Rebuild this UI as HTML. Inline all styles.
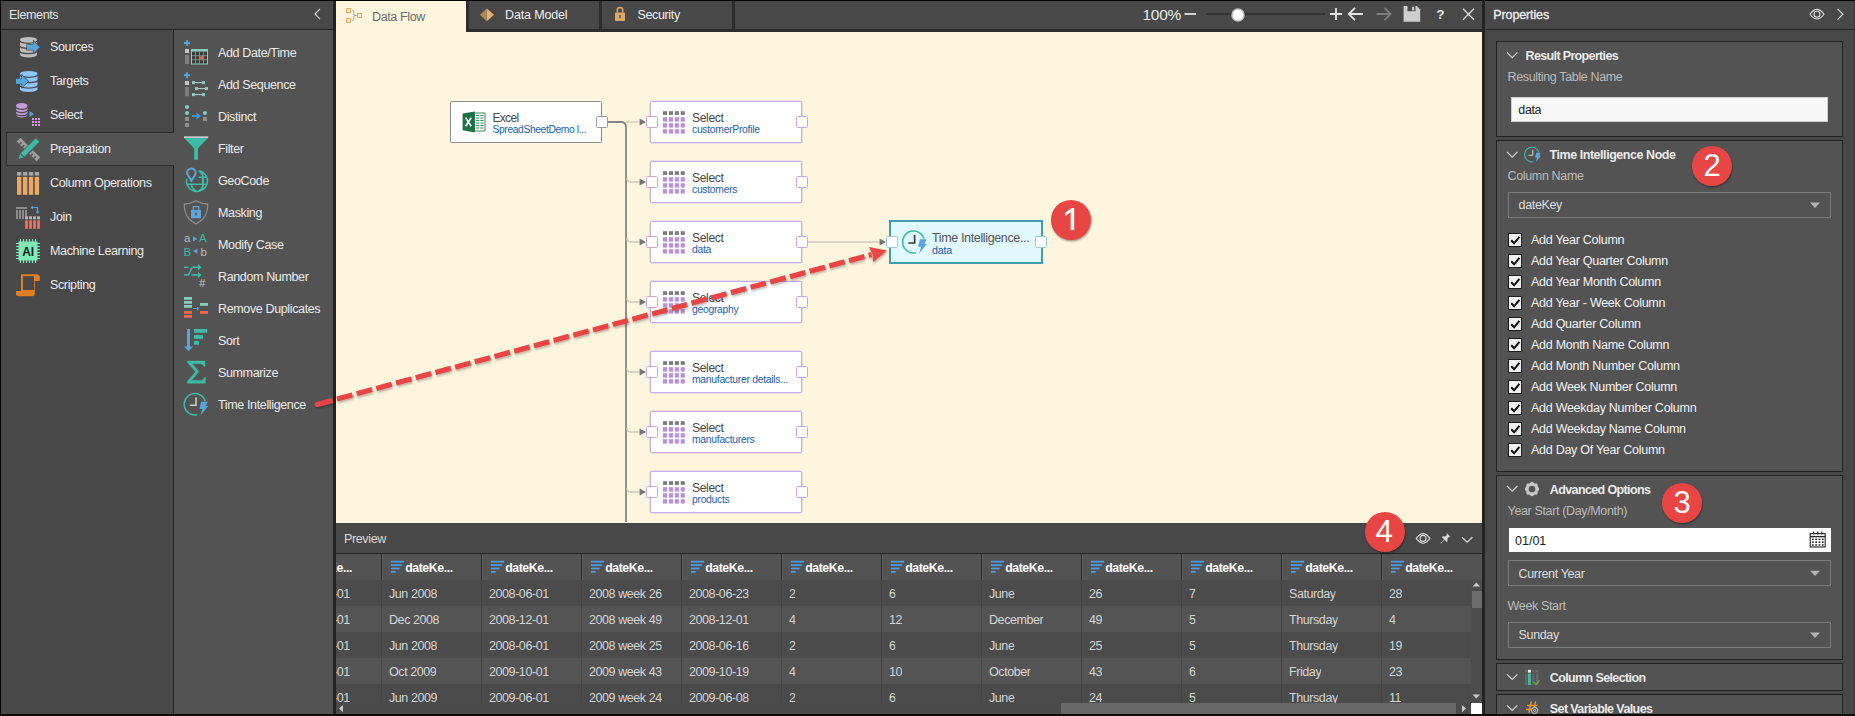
<!DOCTYPE html>
<html><head><meta charset="utf-8"><title>Data Flow</title><style>
*{box-sizing:border-box;margin:0;padding:0}
html,body{width:1855px;height:716px;overflow:hidden;background:#2b2b2b}
body{font-family:"Liberation Sans",sans-serif;font-size:13px;color:#ebebeb;position:relative}
.a{position:absolute}
.t{position:absolute;white-space:nowrap;line-height:16px;height:16px}
.b{font-weight:bold}
svg{position:absolute;overflow:visible}
</style></head><body>
<div class="a" style="left:0px;top:0px;width:1855px;height:1px;background:#000;"></div>
<div class="a" style="left:0px;top:0px;width:1px;height:716px;background:#000;"></div>
<div class="a" style="left:1px;top:1px;width:333px;height:715px;background:#484848;"></div>
<div class="a" style="left:1px;top:29px;width:333px;height:1px;background:#232323;"></div>
<div class="t" style="left:9px;top:7px;font-size:12.5px;color:#e4e4e4;letter-spacing:-0.36px;">Elements</div>
<svg style="left:0px;top:0px" width="340" height="30" viewBox="0 0 340 30"><path d="M320 9 L314.9 14 L320 19" fill="none" stroke="#d6d6d6" stroke-width="1.15"/></svg>
<div class="a" style="left:174px;top:30px;width:159px;height:686px;background:#535353;"></div>
<div class="a" style="left:173px;top:30px;width:1px;height:102px;background:#232323;"></div>
<div class="a" style="left:173px;top:166px;width:1px;height:550px;background:#232323;"></div>
<div class="a" style="left:6px;top:132px;width:168px;height:34px;background:#535353;border:1px solid #2b2b2b;border-right:none"></div>
<div class="t" style="left:50px;top:39px;font-size:12.5px;color:#ebebeb;letter-spacing:-0.36px;">Sources</div>
<div class="t" style="left:50px;top:73px;font-size:12.5px;color:#ebebeb;letter-spacing:-0.36px;">Targets</div>
<div class="t" style="left:50px;top:107px;font-size:12.5px;color:#ebebeb;letter-spacing:-0.36px;">Select</div>
<div class="t" style="left:50px;top:141px;font-size:12.5px;color:#ebebeb;letter-spacing:-0.36px;">Preparation</div>
<div class="t" style="left:50px;top:175px;font-size:12.5px;color:#ebebeb;letter-spacing:-0.36px;">Column Operations</div>
<div class="t" style="left:50px;top:209px;font-size:12.5px;color:#ebebeb;letter-spacing:-0.36px;">Join</div>
<div class="t" style="left:50px;top:243px;font-size:12.5px;color:#ebebeb;letter-spacing:-0.36px;">Machine Learning</div>
<div class="t" style="left:50px;top:277px;font-size:12.5px;color:#ebebeb;letter-spacing:-0.36px;">Scripting</div>
<div class="t" style="left:218px;top:45px;font-size:12.5px;color:#ebebeb;letter-spacing:-0.36px;">Add Date/Time</div>
<div class="t" style="left:218px;top:77px;font-size:12.5px;color:#ebebeb;letter-spacing:-0.36px;">Add Sequence</div>
<div class="t" style="left:218px;top:109px;font-size:12.5px;color:#ebebeb;letter-spacing:-0.36px;">Distinct</div>
<div class="t" style="left:218px;top:141px;font-size:12.5px;color:#ebebeb;letter-spacing:-0.36px;">Filter</div>
<div class="t" style="left:218px;top:173px;font-size:12.5px;color:#ebebeb;letter-spacing:-0.36px;">GeoCode</div>
<div class="t" style="left:218px;top:205px;font-size:12.5px;color:#ebebeb;letter-spacing:-0.36px;">Masking</div>
<div class="t" style="left:218px;top:237px;font-size:12.5px;color:#ebebeb;letter-spacing:-0.36px;">Modify Case</div>
<div class="t" style="left:218px;top:269px;font-size:12.5px;color:#ebebeb;letter-spacing:-0.36px;">Random Number</div>
<div class="t" style="left:218px;top:301px;font-size:12.5px;color:#ebebeb;letter-spacing:-0.36px;">Remove Duplicates</div>
<div class="t" style="left:218px;top:333px;font-size:12.5px;color:#ebebeb;letter-spacing:-0.36px;">Sort</div>
<div class="t" style="left:218px;top:365px;font-size:12.5px;color:#ebebeb;letter-spacing:-0.36px;">Summarize</div>
<div class="t" style="left:218px;top:397px;font-size:12.5px;color:#ebebeb;letter-spacing:-0.36px;">Time Intelligence</div>
<svg style="left:0px;top:0px" width="60" height="310" viewBox="0 0 60 310"><path d="M20 39.7 a8.5 2.7 0 0 1 17 0 v15.1 a8.5 2.7 0 0 1 -17 0 z" fill="#bdbdbd"/><path d="M19.7 40.6 a8.8 2.7 0 0 0 17.6 0" fill="none" stroke="#484848" stroke-width="1.25"/><path d="M19.7 45.800000000000004 a8.8 2.7 0 0 0 17.6 0" fill="none" stroke="#484848" stroke-width="1.25"/><path d="M19.7 51.0 a8.8 2.7 0 0 0 17.6 0" fill="none" stroke="#484848" stroke-width="1.25"/><path d="M27 44.6 h6.5 v-3.4 l6.3 6 l-6.3 6 v-3.4 h-6.5 z" fill="#54a6dc" stroke="#484848" stroke-width="1.2" paint-order="stroke"/><path d="M20 73.7 a8.75 2.7 0 0 1 17.5 0 v15.6 a8.75 2.7 0 0 1 -17.5 0 z" fill="#8fc4f6"/><path d="M19.7 74.60000000000001 a9.05 2.7 0 0 0 18.1 0" fill="none" stroke="#484848" stroke-width="1.25"/><path d="M19.7 79.96666666666667 a9.05 2.7 0 0 0 18.1 0" fill="none" stroke="#484848" stroke-width="1.25"/><path d="M19.7 85.33333333333334 a9.05 2.7 0 0 0 18.1 0" fill="none" stroke="#484848" stroke-width="1.25"/><path d="M16 78.8 h6 v-3.6 l6.3 6.1 l-6.3 6.1 v-3.6 h-6 z" fill="#54a6dc" stroke="#484848" stroke-width="1.2" paint-order="stroke"/><path d="M16 105.7 a5.75 2.7 0 0 1 11.5 0 v9.1 a5.75 2.7 0 0 1 -11.5 0 z" fill="#c09bd8"/><path d="M15.7 106.60000000000001 a6.05 2.7 0 0 0 12.1 0" fill="none" stroke="#484848" stroke-width="1.25"/><path d="M15.7 109.80000000000001 a6.05 2.7 0 0 0 12.1 0" fill="none" stroke="#484848" stroke-width="1.25"/><path d="M15.7 113.00000000000001 a6.05 2.7 0 0 0 12.1 0" fill="none" stroke="#484848" stroke-width="1.25"/><path d="M29.5 111 l4.3 3 l-4.3 3 z" fill="#54a6dc"/><rect x="32" y="118" width="2" height="2" fill="#d59be0"/><rect x="32" y="121" width="2" height="2" fill="#d59be0"/><rect x="32" y="124" width="2" height="2" fill="#d59be0"/><rect x="35" y="118" width="2" height="2" fill="#d59be0"/><rect x="35" y="121" width="2" height="2" fill="#d59be0"/><rect x="35" y="124" width="2" height="2" fill="#d59be0"/><rect x="38" y="118" width="2" height="2" fill="#d59be0"/><rect x="38" y="121" width="2" height="2" fill="#d59be0"/><rect x="38" y="124" width="2" height="2" fill="#d59be0"/><g transform="translate(28.5 149.5) rotate(-45)"><path d="M-2.6 -14 h5.2 v28 h-5.2 z" fill="#9c9c9c"/><path d="M-2.6 -10 h2.6 M-2.6 -6 h2.6 M-2.6 6 h2.6 M-2.6 10 h2.6" stroke="#535353" stroke-width="1.6"/><rect x="-4" y="-3.5" width="8" height="7" fill="#535353"/></g><g transform="translate(28 149.5) rotate(45)"><path d="M-2.5 -13.5 h5 v22 l-2.5 5 l-2.5 -5 z" fill="#3dbba6"/><path d="M-2.5 8.2 h5" stroke="#535353" stroke-width="1"/></g><rect x="17.0" y="172" width="4.4" height="3.6" fill="#a9a9a9"/><rect x="17.0" y="176.8" width="4.4" height="18" fill="#e9a964"/><rect x="22.9" y="172" width="4.4" height="3.6" fill="#a9a9a9"/><rect x="22.9" y="176.8" width="4.4" height="18" fill="#e9a964"/><rect x="28.8" y="172" width="4.4" height="3.6" fill="#a9a9a9"/><rect x="28.8" y="176.8" width="4.4" height="18" fill="#e9a964"/><rect x="34.7" y="172" width="4.4" height="3.6" fill="#a9a9a9"/><rect x="34.7" y="176.8" width="4.4" height="18" fill="#e9a964"/><rect x="16" y="207" width="11" height="2" fill="#8c8c8c"/><rect x="16" y="210" width="2" height="9" fill="#8c8c8c"/><rect x="19" y="210" width="2" height="9" fill="#8c8c8c"/><rect x="22" y="210" width="2" height="9" fill="#8c8c8c"/><rect x="25" y="210" width="2" height="9" fill="#8c8c8c"/><rect x="25" y="216.3" width="3" height="3" fill="#b5b5b5"/><rect x="25" y="220.3" width="3" height="8.5" fill="#ee6a50"/><rect x="29" y="216.3" width="3" height="3" fill="#b5b5b5"/><rect x="29" y="220.3" width="3" height="8.5" fill="#ee6a50"/><rect x="33" y="216.3" width="3" height="3" fill="#b5b5b5"/><rect x="33" y="220.3" width="3" height="8.5" fill="#ee6a50"/><rect x="37" y="216.3" width="3" height="3" fill="#b5b5b5"/><rect x="37" y="220.3" width="3" height="8.5" fill="#ee6a50"/><path d="M32.5 207.5 h5 v4.5" fill="none" stroke="#54a6dc" stroke-width="1.2"/><path d="M33 205.5 l-2.6 2 l2.6 2 z M35.5 211.5 l2 2.6 l2 -2.6 z" fill="#54a6dc"/><path d="M20.5 239 v24 M23.5 239 v24 M26.5 239 v24 M29.5 239 v24 M32.5 239 v24 M35.5 239 v24 M16 243.5 h24 M16 246.5 h24 M16 249.5 h24 M16 252.5 h24 M16 255.5 h24 M16 258.5 h24 " stroke="#7ee8b6" stroke-width="1.2"/><rect x="18.5" y="241.5" width="19" height="19" fill="#7ee8b6"/><text x="28" y="255.6" font-family="Liberation Sans" font-weight="bold" font-size="12" fill="#1c1c1c" text-anchor="middle" letter-spacing="-0.3">AI</text><path d="M21 274.2 h15.5 a3.3 3.3 0 0 1 3.3 3.3 v3.6 h-5 v12.5 a2.6 2.6 0 0 1 -2.6 2.6 h-13.6 a2.6 2.6 0 0 1 -2.6 -2.6 v-2.6 h5 z" fill="#e17d22"/><path d="M23 276.2 h11 v13.8 h-11 z" fill="#484848"/><path d="M21 291.5 h12.3" stroke="#e17d22" stroke-width="1"/></svg>
<svg style="left:0px;top:0px" width="340" height="430" viewBox="0 0 340 430"><path d="M184 43 h6 M187 40 v6" stroke="#54a6dc" stroke-width="1.8"/><rect x="185" y="49" width="4" height="4" fill="#c4c4c4"/><rect x="185" y="55" width="4" height="9" fill="#7e7e7e"/><rect x="191.5" y="49.5" width="16" height="14.5" fill="#3c3c3c" stroke="#84cfbe" stroke-width="1"/><rect x="191" y="49" width="17" height="2.6" fill="#84cfbe"/><path d="M195.5 52 v12 M199.5 52 v12 M203.5 52 v12 M192 55.7 h15 M192 59.7 h15" stroke="#8fb5ab" stroke-width="0.9" opacity="0.75"/><rect x="200.2" y="56.3" width="3" height="3" fill="#f0684a"/><path d="M184 75.2 h6 M187 72.2 v6" stroke="#54a6dc" stroke-width="1.8"/><rect x="185" y="81" width="4" height="4" fill="#c4c4c4"/><rect x="185" y="87" width="4" height="9.2" fill="#7e7e7e"/><path d="M194 82.6 h9" stroke="#c9c9c9" stroke-width="1"/><rect x="192" y="81.1" width="3" height="3" fill="#84cfbe"/><rect x="202" y="81.1" width="3" height="3" fill="#84cfbe"/><path d="M197 88.6 h9" stroke="#c9c9c9" stroke-width="1"/><rect x="195" y="87.1" width="3" height="3" fill="#84cfbe"/><rect x="205" y="87.1" width="3" height="3" fill="#84cfbe"/><path d="M194 94.6 h9" stroke="#c9c9c9" stroke-width="1"/><rect x="192" y="93.1" width="3" height="3" fill="#84cfbe"/><rect x="202" y="93.1" width="3" height="3" fill="#84cfbe"/><circle cx="187" cy="107" r="2" fill="#84cfbe"/><circle cx="187" cy="113" r="2" fill="#84cfbe"/><rect x="185" y="117" width="4" height="4" fill="#8e8e8e"/><rect x="185" y="123" width="4" height="4" fill="#8e8e8e"/><circle cx="205" cy="113" r="2" fill="#84cfbe"/><rect x="203" y="117" width="4" height="4" fill="#8e8e8e"/><path d="M192 116 h5" stroke="#3a9bdc" stroke-width="1.8"/><path d="M196 112.3 l5 3.7 l-5 3.7 l1.2 -3.7 z" fill="#3a9bdc"/><rect x="184" y="136.3" width="24.2" height="1.8" fill="#c8c8c8"/><path d="M184.3 138.1 h23.6 l-9.9 10.2 v11.5 h-3.9 v-11.5 z" fill="#3dbba6"/><g fill="none" stroke="#3dbba6" stroke-width="1.5"><path d="M199.2 170.7 a10.5 10.5 0 1 1 -12.6 8.3"/><path d="M198.5 177.3 h8 M187 184.3 h19.6"/><path d="M198.5 170.8 q5 2.5 5 10.2 q0 7.7 -5 10.2 M202.7 173 v16 M191.3 184.5 q0.8 4.5 5.5 6.8"/></g><path d="M191.4 168.4 a4.3 4.3 0 0 1 4.3 4.3 c0 2.8 -2.8 5.2 -4.3 8 c-1.5 -2.8 -4.3 -5.2 -4.3 -8 a4.3 4.3 0 0 1 4.3 -4.3 z" fill="#535353" stroke="#5aa5dc" stroke-width="2"/><path d="M196 200.8 q6 3 11.6 3.2 q0.8 13.5 -11.6 19.8 q-12.4 -6.3 -11.6 -19.8 q5.6 -0.2 11.6 -3.2 z" fill="none" stroke="#8a8a8a" stroke-width="1.3"/><rect x="191" y="210" width="10" height="8.2" fill="#5aa5dc"/><path d="M193.3 210 v-3.4 h5.4 v3.4" fill="none" stroke="#5aa5dc" stroke-width="1.4"/><rect x="195.2" y="212.5" width="1.6" height="3" fill="#535353"/><text x="184" y="241.6" font-family="Liberation Sans" font-size="11.5" fill="#bdbdbd">a</text><text x="199" y="241.8" font-family="Liberation Sans" font-size="11.5" font-size="14" fill="#3dbba6">A</text><text x="183.6" y="255.6" font-family="Liberation Sans" font-size="11.5" font-size="12.5" fill="#3dbba6">B</text><text x="200.6" y="255.6" font-family="Liberation Sans" font-size="11.5" font-size="12.5" fill="#bdbdbd">b</text><path d="M193 236.3 l4.4 2.6 l-4.4 2.6 z M197.4 248.4 l-4.4 2.6 l4.4 2.6 z" fill="#54a6dc"/><g fill="none" stroke="#3dbba6" stroke-width="1.5"><path d="M184 267.3 h4.5 M192.5 267.3 h7.5 M184 275 h4.5 l3.6 -7.7 M191.5 275 h8.5"/></g><path d="M198 264.2 l3.6 3.1 l-3.6 3.1 z M198 271.9 l3.6 3.1 l-3.6 3.1 z" fill="#3dbba6"/><text x="199" y="286.8" font-family="Liberation Sans" font-size="11.5" font-size="11" fill="#c4c4c4">#</text><rect x="184" y="297" width="8" height="2.8" fill="#84cfbe"/><rect x="184" y="301" width="8" height="2.8" fill="#84cfbe"/><rect x="184" y="305" width="8" height="2.8" fill="#84cfbe"/><rect x="184" y="311" width="8" height="2.8" fill="#f0684a"/><rect x="184" y="315" width="8" height="2.8" fill="#f0684a"/><rect x="200" y="303" width="8" height="2.8" fill="#84cfbe"/><rect x="200" y="311" width="8" height="2.8" fill="#f0684a"/><path d="M193 308.5 h5" stroke="#54a6dc" stroke-width="0.9"/><path d="M197 306.6 l2.3 1.9 l-2.3 1.9 z" fill="#54a6dc"/><path d="M187 329 h3 v17.6 h3.2 l-4.7 4.6 l-4.7 -4.6 h3.2 z" fill="#54a6dc"/><rect x="194" y="329" width="13.2" height="3.8" fill="#3dbba6"/><rect x="194" y="335" width="9" height="3.8" fill="#3dbba6"/><rect x="194" y="341" width="5" height="3.8" fill="#3dbba6"/><path d="M187.3 361 h17.7 v5.4 h-1.1 q-0.5 -2.6 -3.2 -2.6 h-8.4 l6.6 8 l-7.6 8.6 h9.6 q2.8 0 3.4 -3.2 h1.1 v6 h-18.2 v-1.6 l8.4 -9.8 l-8.3 -9.6 z" fill="#3dbba6" stroke="#3dbba6" stroke-width="0.4" stroke-linejoin="miter"/><g transform="translate(195 404.3) scale(1.0)"><path d="M10.3 -3.2 A10.8 10.8 0 1 0 2.2 10.55" fill="none" stroke="#3dbba6" stroke-width="1.5"/><path d="M1 -7 v8 h-6.2" fill="none" stroke="#c9c9c9" stroke-width="1.6"/><path d="M6.2 -2.6 h6.6 l-2.2 4.2 h2.6 l-7.6 9.6 l1.8 -6.6 h-3 z" fill="#5aa5dc" stroke="#535353" stroke-width="0.8" paint-order="stroke"/></g></svg>
<div class="a" style="left:333px;top:1px;width:3px;height:715px;background:#232323;"></div>
<div class="a" style="left:336px;top:1px;width:1146px;height:28px;background:#484848;"></div>
<div class="a" style="left:336px;top:29px;width:1146px;height:3px;background:#2d2d2d;"></div>
<div class="a" style="left:336px;top:32px;width:1146px;height:491px;background:#fef5de;"></div>
<div class="a" style="left:336px;top:1px;width:130px;height:31px;background:#fef5de;"></div>
<div class="a" style="left:466px;top:1px;width:3px;height:31px;background:#2d2d2d;"></div>
<div class="a" style="left:599px;top:1px;width:3px;height:29px;background:#2d2d2d;"></div>
<div class="a" style="left:732px;top:1px;width:3px;height:29px;background:#2d2d2d;"></div>
<div class="t" style="left:372px;top:9px;font-size:12.5px;color:#6b6b6b;letter-spacing:-0.36px;">Data Flow</div>
<div class="t" style="left:505px;top:7px;font-size:12.5px;color:#f0f0f0;letter-spacing:-0.15px;">Data Model</div>
<div class="t" style="left:637.5px;top:7px;font-size:12.5px;color:#f0f0f0;letter-spacing:-0.36px;">Security</div>
<svg style="left:0px;top:0px" width="1500" height="32" viewBox="0 0 1500 32"><g fill="none" stroke="#e3a862" stroke-width="1.1"><rect x="346.6" y="8.7" width="3.9" height="3.9"/><rect x="346.6" y="18.5" width="3.9" height="3.9"/><rect x="357.6" y="13.5" width="3.9" height="3.9"/><path d="M352 10.4 h0.6 q1.2 0 1.2 1.2 v2.6 q0 1.2 1.6 1.2 q-1.6 0 -1.6 1.2 v2.6 q0 1.2 -1.2 1.2 h-0.6" stroke="#98a0b0" stroke-width="0.9"/><path d="M354.6 15.45 h2.4" stroke="#98a0b0" stroke-width="0.9"/></g><path d="M486.8 8.4 l7.2 6.4 l-7.2 6.4 z" fill="#e6b071"/><path d="M486.8 8.4 l-7 6.4 l7 6.4 z" fill="#b08a5a"/><rect x="615" y="12.5" width="10" height="8.6" rx="0.8" fill="#e3a862"/><path d="M617.3 12.5 v-2.2 a2.7 2.7 0 0 1 5.4 0 v2.2" fill="none" stroke="#e3a862" stroke-width="1.5"/><rect x="619.3" y="15" width="1.4" height="3.2" fill="#484848"/><path d="M1184.5 14 h11.5" stroke="#e6e6e6" stroke-width="1.8"/><path d="M1206 14 h119" stroke="#2c2c2c" stroke-width="1.4"/><circle cx="1238" cy="15" r="6" fill="#fff" stroke="#c4c4c4" stroke-width="1.5"/><path d="M1330 14 h12 M1336 8 v12" stroke="#e6e6e6" stroke-width="1.8"/><path d="M1363 14 h-14 M1355 7.8 l-6.2 6.2 l6.2 6.2" fill="none" stroke="#e6e6e6" stroke-width="1.8"/><path d="M1376.5 14 h14 M1384.5 7.8 l6.2 6.2 l-6.2 6.2" fill="none" stroke="#7d7d7d" stroke-width="1.8"/><path d="M1403.6 6 h13.2 l3.4 3.4 v12.4 h-16.6 z" fill="#cdcdcd"/><rect x="1407.5" y="6" width="8" height="5.2" fill="#484848"/><rect x="1412" y="6.8" width="2.2" height="3.6" fill="#cdcdcd"/><path d="M1463 8.8 l11 11 M1474 8.8 l-11 11" stroke="#e0e0e0" stroke-width="1.3"/></svg>
<div class="t" style="left:1142.5px;top:7px;font-size:15.5px;color:#ebebeb;letter-spacing:-0.3px;">100%</div>
<div class="t b" style="left:1436.2px;top:6.5px;font-size:13.5px;color:#e8e8e8;">?</div>
<svg style="left:0px;top:0px" width="1100" height="523" viewBox="0 0 1100 523"><path d="M607.5 122 H621 Q626 122 626 127 V522" fill="none" stroke="#858585" stroke-width="1.8"/><path d="M626 122 H640" stroke="#cfc9bb" stroke-width="1.3"/><path d="M626.8 178 Q626.8 182 631 182 H640" fill="none" stroke="#cfc9bb" stroke-width="1.3"/><path d="M626.8 238 Q626.8 242 631 242 H640" fill="none" stroke="#cfc9bb" stroke-width="1.3"/><path d="M626.8 298 Q626.8 302 631 302 H640" fill="none" stroke="#cfc9bb" stroke-width="1.3"/><path d="M626.8 368 Q626.8 372 631 372 H640" fill="none" stroke="#cfc9bb" stroke-width="1.3"/><path d="M626.8 428 Q626.8 432 631 432 H640" fill="none" stroke="#cfc9bb" stroke-width="1.3"/><path d="M626.8 488 Q626.8 492 631 492 H640" fill="none" stroke="#cfc9bb" stroke-width="1.3"/><path d="M639.6 118.4 L646 122 L639.6 125.6 Z" fill="#767676"/><path d="M639.6 178.4 L646 182 L639.6 185.6 Z" fill="#767676"/><path d="M639.6 238.4 L646 242 L639.6 245.6 Z" fill="#767676"/><path d="M639.6 298.4 L646 302 L639.6 305.6 Z" fill="#767676"/><path d="M639.6 368.4 L646 372 L639.6 375.6 Z" fill="#767676"/><path d="M639.6 428.4 L646 432 L639.6 435.6 Z" fill="#767676"/><path d="M639.6 488.4 L646 492 L639.6 495.6 Z" fill="#767676"/><path d="M808 242 H880" stroke="#cfc9bb" stroke-width="1.3"/><path d="M879.6 238.4 L886 242 L879.6 245.6 Z" fill="#767676"/></svg>
<div class="a" style="left:450px;top:101px;width:152px;height:42px;background:#fff;border:1px solid #8b8b8b;border-radius:1.5px"></div>
<div class="a" style="left:595.5px;top:116px;width:12px;height:12px;background:#fff;border:1px solid #9a9a9a;border-radius:1.5px"></div>
<div class="t" style="left:492.5px;top:110px;font-size:12px;color:#4a4a4a;letter-spacing:-0.7px;">Excel</div>
<div class="t" style="left:492.5px;top:121.80000000000001px;font-size:10.3px;color:#1b62aa;letter-spacing:-0.38px;">SpreadSheetDemo l...</div>
<svg style="left:0px;top:0px" width="500" height="140" viewBox="0 0 500 140"><path d="M474.5 113 h10.5 v18 h-10.5 z" fill="#fff" stroke="#2f7d55" stroke-width="0.9"/><path d="M476 115.5 h7.6 M476 118 h7.6 M476 120.5 h7.6 M476 123 h7.6 M476 125.5 h7.6 M476 128 h7.6" stroke="#3c8a62" stroke-width="1.2"/><path d="M479.8 114 v16" stroke="#fff" stroke-width="0.8"/><path d="M462.6 113.6 l12.2 -2.2 v21 l-12.2 -2.2 z" fill="#1e7145"/><path d="M465.6 117.6 l5.6 8.6 M471.2 117.6 l-5.6 8.6" stroke="#fff" stroke-width="1.7"/></svg>
<div class="a" style="left:650px;top:101px;width:152px;height:42px;background:#fff;border:1px solid #c7aee6;border-radius:1.5px;box-shadow:0 0 0 0.5px #d9c8ee"></div>
<div class="a" style="left:645.5px;top:116px;width:12px;height:12px;background:#fff;border:1px solid #c3a7e4;border-radius:1.5px"></div>
<div class="a" style="left:795.5px;top:116px;width:12px;height:12px;background:#fff;border:1px solid #c3a7e4;border-radius:1.5px"></div>
<div class="t" style="left:692px;top:110px;font-size:12.2px;color:#4a4a4a;letter-spacing:-0.4px;">Select</div>
<div class="t" style="left:692px;top:121.80000000000001px;font-size:10.4px;color:#1b62aa;letter-spacing:-0.3px;">customerProfile</div>
<div class="a" style="left:650px;top:161px;width:152px;height:42px;background:#fff;border:1px solid #c7aee6;border-radius:1.5px;box-shadow:0 0 0 0.5px #d9c8ee"></div>
<div class="a" style="left:645.5px;top:176px;width:12px;height:12px;background:#fff;border:1px solid #c3a7e4;border-radius:1.5px"></div>
<div class="a" style="left:795.5px;top:176px;width:12px;height:12px;background:#fff;border:1px solid #c3a7e4;border-radius:1.5px"></div>
<div class="t" style="left:692px;top:170px;font-size:12.2px;color:#4a4a4a;letter-spacing:-0.4px;">Select</div>
<div class="t" style="left:692px;top:181.8px;font-size:10.4px;color:#1b62aa;letter-spacing:-0.3px;">customers</div>
<div class="a" style="left:650px;top:221px;width:152px;height:42px;background:#fff;border:1px solid #c7aee6;border-radius:1.5px;box-shadow:0 0 0 0.5px #d9c8ee"></div>
<div class="a" style="left:645.5px;top:236px;width:12px;height:12px;background:#fff;border:1px solid #c3a7e4;border-radius:1.5px"></div>
<div class="a" style="left:795.5px;top:236px;width:12px;height:12px;background:#fff;border:1px solid #c3a7e4;border-radius:1.5px"></div>
<div class="t" style="left:692px;top:230px;font-size:12.2px;color:#4a4a4a;letter-spacing:-0.4px;">Select</div>
<div class="t" style="left:692px;top:241.8px;font-size:10.4px;color:#1b62aa;letter-spacing:-0.3px;">data</div>
<div class="a" style="left:650px;top:281px;width:152px;height:42px;background:#fff;border:1px solid #c7aee6;border-radius:1.5px;box-shadow:0 0 0 0.5px #d9c8ee"></div>
<div class="a" style="left:645.5px;top:296px;width:12px;height:12px;background:#fff;border:1px solid #c3a7e4;border-radius:1.5px"></div>
<div class="a" style="left:795.5px;top:296px;width:12px;height:12px;background:#fff;border:1px solid #c3a7e4;border-radius:1.5px"></div>
<div class="t" style="left:692px;top:290px;font-size:12.2px;color:#4a4a4a;letter-spacing:-0.4px;">Select</div>
<div class="t" style="left:692px;top:301.8px;font-size:10.4px;color:#1b62aa;letter-spacing:-0.3px;">geography</div>
<div class="a" style="left:650px;top:351px;width:152px;height:42px;background:#fff;border:1px solid #c7aee6;border-radius:1.5px;box-shadow:0 0 0 0.5px #d9c8ee"></div>
<div class="a" style="left:645.5px;top:366px;width:12px;height:12px;background:#fff;border:1px solid #c3a7e4;border-radius:1.5px"></div>
<div class="a" style="left:795.5px;top:366px;width:12px;height:12px;background:#fff;border:1px solid #c3a7e4;border-radius:1.5px"></div>
<div class="t" style="left:692px;top:360px;font-size:12.2px;color:#4a4a4a;letter-spacing:-0.4px;">Select</div>
<div class="t" style="left:692px;top:371.8px;font-size:10.4px;color:#1b62aa;letter-spacing:-0.3px;">manufacturer details...</div>
<div class="a" style="left:650px;top:411px;width:152px;height:42px;background:#fff;border:1px solid #c7aee6;border-radius:1.5px;box-shadow:0 0 0 0.5px #d9c8ee"></div>
<div class="a" style="left:645.5px;top:426px;width:12px;height:12px;background:#fff;border:1px solid #c3a7e4;border-radius:1.5px"></div>
<div class="a" style="left:795.5px;top:426px;width:12px;height:12px;background:#fff;border:1px solid #c3a7e4;border-radius:1.5px"></div>
<div class="t" style="left:692px;top:420px;font-size:12.2px;color:#4a4a4a;letter-spacing:-0.4px;">Select</div>
<div class="t" style="left:692px;top:431.8px;font-size:10.4px;color:#1b62aa;letter-spacing:-0.3px;">manufacturers</div>
<div class="a" style="left:650px;top:471px;width:152px;height:42px;background:#fff;border:1px solid #c7aee6;border-radius:1.5px;box-shadow:0 0 0 0.5px #d9c8ee"></div>
<div class="a" style="left:645.5px;top:486px;width:12px;height:12px;background:#fff;border:1px solid #c3a7e4;border-radius:1.5px"></div>
<div class="a" style="left:795.5px;top:486px;width:12px;height:12px;background:#fff;border:1px solid #c3a7e4;border-radius:1.5px"></div>
<div class="t" style="left:692px;top:480px;font-size:12.2px;color:#4a4a4a;letter-spacing:-0.4px;">Select</div>
<div class="t" style="left:692px;top:491.8px;font-size:10.4px;color:#1b62aa;letter-spacing:-0.3px;">products</div>
<svg style="left:0px;top:0px" width="700" height="523" viewBox="0 0 700 523"><rect x="663.0" y="111.2" width="4.1" height="3.7" fill="#7b7b7b"/><rect x="663.0" y="117.2" width="4.1" height="4.4" fill="#b88fdc"/><rect x="663.0" y="123.2" width="4.1" height="4.4" fill="#b88fdc"/><rect x="663.0" y="129.2" width="4.1" height="4.4" fill="#b88fdc"/><rect x="668.9" y="111.2" width="4.1" height="3.7" fill="#7b7b7b"/><rect x="668.9" y="117.2" width="4.1" height="4.4" fill="#b88fdc"/><rect x="668.9" y="123.2" width="4.1" height="4.4" fill="#b88fdc"/><rect x="668.9" y="129.2" width="4.1" height="4.4" fill="#b88fdc"/><rect x="674.8" y="111.2" width="4.1" height="3.7" fill="#7b7b7b"/><rect x="674.8" y="117.2" width="4.1" height="4.4" fill="#b88fdc"/><rect x="674.8" y="123.2" width="4.1" height="4.4" fill="#b88fdc"/><rect x="674.8" y="129.2" width="4.1" height="4.4" fill="#b88fdc"/><rect x="680.7" y="111.2" width="4.1" height="3.7" fill="#7b7b7b"/><rect x="680.7" y="117.2" width="4.1" height="4.4" fill="#b88fdc"/><rect x="680.7" y="123.2" width="4.1" height="4.4" fill="#b88fdc"/><rect x="680.7" y="129.2" width="4.1" height="4.4" fill="#b88fdc"/><rect x="663.0" y="171.2" width="4.1" height="3.7" fill="#7b7b7b"/><rect x="663.0" y="177.2" width="4.1" height="4.4" fill="#b88fdc"/><rect x="663.0" y="183.2" width="4.1" height="4.4" fill="#b88fdc"/><rect x="663.0" y="189.2" width="4.1" height="4.4" fill="#b88fdc"/><rect x="668.9" y="171.2" width="4.1" height="3.7" fill="#7b7b7b"/><rect x="668.9" y="177.2" width="4.1" height="4.4" fill="#b88fdc"/><rect x="668.9" y="183.2" width="4.1" height="4.4" fill="#b88fdc"/><rect x="668.9" y="189.2" width="4.1" height="4.4" fill="#b88fdc"/><rect x="674.8" y="171.2" width="4.1" height="3.7" fill="#7b7b7b"/><rect x="674.8" y="177.2" width="4.1" height="4.4" fill="#b88fdc"/><rect x="674.8" y="183.2" width="4.1" height="4.4" fill="#b88fdc"/><rect x="674.8" y="189.2" width="4.1" height="4.4" fill="#b88fdc"/><rect x="680.7" y="171.2" width="4.1" height="3.7" fill="#7b7b7b"/><rect x="680.7" y="177.2" width="4.1" height="4.4" fill="#b88fdc"/><rect x="680.7" y="183.2" width="4.1" height="4.4" fill="#b88fdc"/><rect x="680.7" y="189.2" width="4.1" height="4.4" fill="#b88fdc"/><rect x="663.0" y="231.2" width="4.1" height="3.7" fill="#7b7b7b"/><rect x="663.0" y="237.2" width="4.1" height="4.4" fill="#b88fdc"/><rect x="663.0" y="243.2" width="4.1" height="4.4" fill="#b88fdc"/><rect x="663.0" y="249.2" width="4.1" height="4.4" fill="#b88fdc"/><rect x="668.9" y="231.2" width="4.1" height="3.7" fill="#7b7b7b"/><rect x="668.9" y="237.2" width="4.1" height="4.4" fill="#b88fdc"/><rect x="668.9" y="243.2" width="4.1" height="4.4" fill="#b88fdc"/><rect x="668.9" y="249.2" width="4.1" height="4.4" fill="#b88fdc"/><rect x="674.8" y="231.2" width="4.1" height="3.7" fill="#7b7b7b"/><rect x="674.8" y="237.2" width="4.1" height="4.4" fill="#b88fdc"/><rect x="674.8" y="243.2" width="4.1" height="4.4" fill="#b88fdc"/><rect x="674.8" y="249.2" width="4.1" height="4.4" fill="#b88fdc"/><rect x="680.7" y="231.2" width="4.1" height="3.7" fill="#7b7b7b"/><rect x="680.7" y="237.2" width="4.1" height="4.4" fill="#b88fdc"/><rect x="680.7" y="243.2" width="4.1" height="4.4" fill="#b88fdc"/><rect x="680.7" y="249.2" width="4.1" height="4.4" fill="#b88fdc"/><rect x="663.0" y="291.2" width="4.1" height="3.7" fill="#7b7b7b"/><rect x="663.0" y="297.2" width="4.1" height="4.4" fill="#b88fdc"/><rect x="663.0" y="303.2" width="4.1" height="4.4" fill="#b88fdc"/><rect x="663.0" y="309.2" width="4.1" height="4.4" fill="#b88fdc"/><rect x="668.9" y="291.2" width="4.1" height="3.7" fill="#7b7b7b"/><rect x="668.9" y="297.2" width="4.1" height="4.4" fill="#b88fdc"/><rect x="668.9" y="303.2" width="4.1" height="4.4" fill="#b88fdc"/><rect x="668.9" y="309.2" width="4.1" height="4.4" fill="#b88fdc"/><rect x="674.8" y="291.2" width="4.1" height="3.7" fill="#7b7b7b"/><rect x="674.8" y="297.2" width="4.1" height="4.4" fill="#b88fdc"/><rect x="674.8" y="303.2" width="4.1" height="4.4" fill="#b88fdc"/><rect x="674.8" y="309.2" width="4.1" height="4.4" fill="#b88fdc"/><rect x="680.7" y="291.2" width="4.1" height="3.7" fill="#7b7b7b"/><rect x="680.7" y="297.2" width="4.1" height="4.4" fill="#b88fdc"/><rect x="680.7" y="303.2" width="4.1" height="4.4" fill="#b88fdc"/><rect x="680.7" y="309.2" width="4.1" height="4.4" fill="#b88fdc"/><rect x="663.0" y="361.2" width="4.1" height="3.7" fill="#7b7b7b"/><rect x="663.0" y="367.2" width="4.1" height="4.4" fill="#b88fdc"/><rect x="663.0" y="373.2" width="4.1" height="4.4" fill="#b88fdc"/><rect x="663.0" y="379.2" width="4.1" height="4.4" fill="#b88fdc"/><rect x="668.9" y="361.2" width="4.1" height="3.7" fill="#7b7b7b"/><rect x="668.9" y="367.2" width="4.1" height="4.4" fill="#b88fdc"/><rect x="668.9" y="373.2" width="4.1" height="4.4" fill="#b88fdc"/><rect x="668.9" y="379.2" width="4.1" height="4.4" fill="#b88fdc"/><rect x="674.8" y="361.2" width="4.1" height="3.7" fill="#7b7b7b"/><rect x="674.8" y="367.2" width="4.1" height="4.4" fill="#b88fdc"/><rect x="674.8" y="373.2" width="4.1" height="4.4" fill="#b88fdc"/><rect x="674.8" y="379.2" width="4.1" height="4.4" fill="#b88fdc"/><rect x="680.7" y="361.2" width="4.1" height="3.7" fill="#7b7b7b"/><rect x="680.7" y="367.2" width="4.1" height="4.4" fill="#b88fdc"/><rect x="680.7" y="373.2" width="4.1" height="4.4" fill="#b88fdc"/><rect x="680.7" y="379.2" width="4.1" height="4.4" fill="#b88fdc"/><rect x="663.0" y="421.2" width="4.1" height="3.7" fill="#7b7b7b"/><rect x="663.0" y="427.2" width="4.1" height="4.4" fill="#b88fdc"/><rect x="663.0" y="433.2" width="4.1" height="4.4" fill="#b88fdc"/><rect x="663.0" y="439.2" width="4.1" height="4.4" fill="#b88fdc"/><rect x="668.9" y="421.2" width="4.1" height="3.7" fill="#7b7b7b"/><rect x="668.9" y="427.2" width="4.1" height="4.4" fill="#b88fdc"/><rect x="668.9" y="433.2" width="4.1" height="4.4" fill="#b88fdc"/><rect x="668.9" y="439.2" width="4.1" height="4.4" fill="#b88fdc"/><rect x="674.8" y="421.2" width="4.1" height="3.7" fill="#7b7b7b"/><rect x="674.8" y="427.2" width="4.1" height="4.4" fill="#b88fdc"/><rect x="674.8" y="433.2" width="4.1" height="4.4" fill="#b88fdc"/><rect x="674.8" y="439.2" width="4.1" height="4.4" fill="#b88fdc"/><rect x="680.7" y="421.2" width="4.1" height="3.7" fill="#7b7b7b"/><rect x="680.7" y="427.2" width="4.1" height="4.4" fill="#b88fdc"/><rect x="680.7" y="433.2" width="4.1" height="4.4" fill="#b88fdc"/><rect x="680.7" y="439.2" width="4.1" height="4.4" fill="#b88fdc"/><rect x="663.0" y="481.2" width="4.1" height="3.7" fill="#7b7b7b"/><rect x="663.0" y="487.2" width="4.1" height="4.4" fill="#b88fdc"/><rect x="663.0" y="493.2" width="4.1" height="4.4" fill="#b88fdc"/><rect x="663.0" y="499.2" width="4.1" height="4.4" fill="#b88fdc"/><rect x="668.9" y="481.2" width="4.1" height="3.7" fill="#7b7b7b"/><rect x="668.9" y="487.2" width="4.1" height="4.4" fill="#b88fdc"/><rect x="668.9" y="493.2" width="4.1" height="4.4" fill="#b88fdc"/><rect x="668.9" y="499.2" width="4.1" height="4.4" fill="#b88fdc"/><rect x="674.8" y="481.2" width="4.1" height="3.7" fill="#7b7b7b"/><rect x="674.8" y="487.2" width="4.1" height="4.4" fill="#b88fdc"/><rect x="674.8" y="493.2" width="4.1" height="4.4" fill="#b88fdc"/><rect x="674.8" y="499.2" width="4.1" height="4.4" fill="#b88fdc"/><rect x="680.7" y="481.2" width="4.1" height="3.7" fill="#7b7b7b"/><rect x="680.7" y="487.2" width="4.1" height="4.4" fill="#b88fdc"/><rect x="680.7" y="493.2" width="4.1" height="4.4" fill="#b88fdc"/><rect x="680.7" y="499.2" width="4.1" height="4.4" fill="#b88fdc"/></svg>
<div class="a" style="left:889.3px;top:219.8px;width:153.7px;height:44.4px;background:#e1f8fd;border:2.6px solid #429db0"></div>
<div class="a" style="left:885.8px;top:236px;width:12px;height:12px;background:#fff;border:1px solid #9ccbd4;border-radius:1.5px"></div>
<div class="a" style="left:1035.3px;top:236px;width:12px;height:12px;background:#fff;border:1px solid #9ccbd4;border-radius:1.5px"></div>
<div class="t" style="left:932px;top:230px;font-size:12.5px;color:#555;letter-spacing:-0.36px;">Time Intelligence...</div>
<div class="t" style="left:932px;top:242px;font-size:10.6px;color:#1b62aa;letter-spacing:-0.2px;">data</div>
<svg style="left:0px;top:0px" width="1000" height="300" viewBox="0 0 1000 300"><g transform="translate(913.6 242) scale(1.02)"><path d="M10.3 -3.2 A10.8 10.8 0 1 0 2.2 10.55" fill="none" stroke="#3dbba6" stroke-width="1.5"/><path d="M1 -7 v8 h-6.2" fill="none" stroke="#3a3a3a" stroke-width="1.6"/><path d="M6.2 -2.6 h6.6 l-2.2 4.2 h2.6 l-7.6 9.6 l1.8 -6.6 h-3 z" fill="#5aa5dc" stroke="#e1f8fd" stroke-width="0.8" paint-order="stroke"/></g></svg>
<div class="a" style="left:336px;top:523px;width:1146px;height:193px;background:#484848;"></div>
<div class="t" style="left:344px;top:531px;font-size:12.5px;color:#dcdcdc;letter-spacing:-0.36px;">Preview</div>
<div class="a" style="left:336px;top:553px;width:1146px;height:1px;background:#232323;"></div>
<div class="a" style="left:336px;top:554px;width:1146px;height:26px;background:#535353;"></div>
<div class="a" style="left:336px;top:580px;width:1135px;height:26px;background:#4b4b4b;"></div>
<div class="a" style="left:336px;top:606px;width:1135px;height:26px;background:#545454;"></div>
<div class="a" style="left:336px;top:632px;width:1135px;height:26px;background:#4b4b4b;"></div>
<div class="a" style="left:336px;top:658px;width:1135px;height:26px;background:#545454;"></div>
<div class="a" style="left:336px;top:684px;width:1135px;height:26px;background:#4b4b4b;"></div>
<div class="a" style="left:1471px;top:580px;width:11px;height:123px;background:#4d4d4d;"></div>
<div class="a" style="left:1471.5px;top:591px;width:10px;height:16.5px;background:#6c6c6c;"></div>
<div class="a" style="left:381px;top:554px;width:1px;height:26px;background:#2a2a2a;"></div>
<div class="a" style="left:382px;top:554px;width:1px;height:26px;background:#5e5e5e;"></div>
<div class="a" style="left:381px;top:580px;width:1px;height:123px;background:#444;"></div>
<div class="a" style="left:481px;top:554px;width:1px;height:26px;background:#2a2a2a;"></div>
<div class="a" style="left:482px;top:554px;width:1px;height:26px;background:#5e5e5e;"></div>
<div class="a" style="left:481px;top:580px;width:1px;height:123px;background:#444;"></div>
<div class="a" style="left:581px;top:554px;width:1px;height:26px;background:#2a2a2a;"></div>
<div class="a" style="left:582px;top:554px;width:1px;height:26px;background:#5e5e5e;"></div>
<div class="a" style="left:581px;top:580px;width:1px;height:123px;background:#444;"></div>
<div class="a" style="left:681px;top:554px;width:1px;height:26px;background:#2a2a2a;"></div>
<div class="a" style="left:682px;top:554px;width:1px;height:26px;background:#5e5e5e;"></div>
<div class="a" style="left:681px;top:580px;width:1px;height:123px;background:#444;"></div>
<div class="a" style="left:781px;top:554px;width:1px;height:26px;background:#2a2a2a;"></div>
<div class="a" style="left:782px;top:554px;width:1px;height:26px;background:#5e5e5e;"></div>
<div class="a" style="left:781px;top:580px;width:1px;height:123px;background:#444;"></div>
<div class="a" style="left:881px;top:554px;width:1px;height:26px;background:#2a2a2a;"></div>
<div class="a" style="left:882px;top:554px;width:1px;height:26px;background:#5e5e5e;"></div>
<div class="a" style="left:881px;top:580px;width:1px;height:123px;background:#444;"></div>
<div class="a" style="left:981px;top:554px;width:1px;height:26px;background:#2a2a2a;"></div>
<div class="a" style="left:982px;top:554px;width:1px;height:26px;background:#5e5e5e;"></div>
<div class="a" style="left:981px;top:580px;width:1px;height:123px;background:#444;"></div>
<div class="a" style="left:1081px;top:554px;width:1px;height:26px;background:#2a2a2a;"></div>
<div class="a" style="left:1082px;top:554px;width:1px;height:26px;background:#5e5e5e;"></div>
<div class="a" style="left:1081px;top:580px;width:1px;height:123px;background:#444;"></div>
<div class="a" style="left:1181px;top:554px;width:1px;height:26px;background:#2a2a2a;"></div>
<div class="a" style="left:1182px;top:554px;width:1px;height:26px;background:#5e5e5e;"></div>
<div class="a" style="left:1181px;top:580px;width:1px;height:123px;background:#444;"></div>
<div class="a" style="left:1281px;top:554px;width:1px;height:26px;background:#2a2a2a;"></div>
<div class="a" style="left:1282px;top:554px;width:1px;height:26px;background:#5e5e5e;"></div>
<div class="a" style="left:1281px;top:580px;width:1px;height:123px;background:#444;"></div>
<div class="a" style="left:1381px;top:554px;width:1px;height:26px;background:#2a2a2a;"></div>
<div class="a" style="left:1382px;top:554px;width:1px;height:26px;background:#5e5e5e;"></div>
<div class="a" style="left:1381px;top:580px;width:1px;height:123px;background:#444;"></div>
<div class="a" style="left:336px;top:554px;width:45px;height:150px;overflow:hidden">
<div class="t b" style="right:29px;top:6px;font-size:12.3px;letter-spacing:-0.4px;color:#fff">dateKe...</div>
<div class="t" style="right:31.2px;top:31.8px;font-size:12.5px;letter-spacing:-0.4px;color:#d6d6d6">2008-06-01</div>
<div class="t" style="right:31.2px;top:57.8px;font-size:12.5px;letter-spacing:-0.4px;color:#d6d6d6">2008-06-01</div>
<div class="t" style="right:31.2px;top:83.8px;font-size:12.5px;letter-spacing:-0.4px;color:#d6d6d6">2008-06-01</div>
<div class="t" style="right:31.2px;top:109.8px;font-size:12.5px;letter-spacing:-0.4px;color:#d6d6d6">2008-06-01</div>
<div class="t" style="right:31.2px;top:135.8px;font-size:12.5px;letter-spacing:-0.4px;color:#d6d6d6">2008-06-01</div>
</div>
<div class="t b" style="left:405.2px;top:560.2px;font-size:12.3px;color:#fff;letter-spacing:-0.42px;">dateKe...</div>
<div class="t" style="left:389px;top:585.8px;font-size:12.5px;color:#d6d6d6;letter-spacing:-0.42px;clip-path:inset(0 0 0px 0);">Jun 2008</div>
<div class="t" style="left:389px;top:611.8px;font-size:12.5px;color:#d6d6d6;letter-spacing:-0.42px;clip-path:inset(0 0 0px 0);">Dec 2008</div>
<div class="t" style="left:389px;top:637.8px;font-size:12.5px;color:#d6d6d6;letter-spacing:-0.42px;clip-path:inset(0 0 0px 0);">Jun 2008</div>
<div class="t" style="left:389px;top:663.8px;font-size:12.5px;color:#d6d6d6;letter-spacing:-0.42px;clip-path:inset(0 0 0px 0);">Oct 2009</div>
<div class="t" style="left:389px;top:689.8px;font-size:12.5px;color:#d6d6d6;letter-spacing:-0.42px;clip-path:inset(0 0 0px 0);">Jun 2009</div>
<div class="t b" style="left:505.2px;top:560.2px;font-size:12.3px;color:#fff;letter-spacing:-0.42px;">dateKe...</div>
<div class="t" style="left:489px;top:585.8px;font-size:12.5px;color:#d6d6d6;letter-spacing:-0.42px;clip-path:inset(0 0 0px 0);">2008-06-01</div>
<div class="t" style="left:489px;top:611.8px;font-size:12.5px;color:#d6d6d6;letter-spacing:-0.42px;clip-path:inset(0 0 0px 0);">2008-12-01</div>
<div class="t" style="left:489px;top:637.8px;font-size:12.5px;color:#d6d6d6;letter-spacing:-0.42px;clip-path:inset(0 0 0px 0);">2008-06-01</div>
<div class="t" style="left:489px;top:663.8px;font-size:12.5px;color:#d6d6d6;letter-spacing:-0.42px;clip-path:inset(0 0 0px 0);">2009-10-01</div>
<div class="t" style="left:489px;top:689.8px;font-size:12.5px;color:#d6d6d6;letter-spacing:-0.42px;clip-path:inset(0 0 0px 0);">2009-06-01</div>
<div class="t b" style="left:605.2px;top:560.2px;font-size:12.3px;color:#fff;letter-spacing:-0.42px;">dateKe...</div>
<div class="t" style="left:589px;top:585.8px;font-size:12.5px;color:#d6d6d6;letter-spacing:-0.42px;clip-path:inset(0 0 0px 0);">2008 week 26</div>
<div class="t" style="left:589px;top:611.8px;font-size:12.5px;color:#d6d6d6;letter-spacing:-0.42px;clip-path:inset(0 0 0px 0);">2008 week 49</div>
<div class="t" style="left:589px;top:637.8px;font-size:12.5px;color:#d6d6d6;letter-spacing:-0.42px;clip-path:inset(0 0 0px 0);">2008 week 25</div>
<div class="t" style="left:589px;top:663.8px;font-size:12.5px;color:#d6d6d6;letter-spacing:-0.42px;clip-path:inset(0 0 0px 0);">2009 week 43</div>
<div class="t" style="left:589px;top:689.8px;font-size:12.5px;color:#d6d6d6;letter-spacing:-0.42px;clip-path:inset(0 0 0px 0);">2009 week 24</div>
<div class="t b" style="left:705.2px;top:560.2px;font-size:12.3px;color:#fff;letter-spacing:-0.42px;">dateKe...</div>
<div class="t" style="left:689px;top:585.8px;font-size:12.5px;color:#d6d6d6;letter-spacing:-0.42px;clip-path:inset(0 0 0px 0);">2008-06-23</div>
<div class="t" style="left:689px;top:611.8px;font-size:12.5px;color:#d6d6d6;letter-spacing:-0.42px;clip-path:inset(0 0 0px 0);">2008-12-01</div>
<div class="t" style="left:689px;top:637.8px;font-size:12.5px;color:#d6d6d6;letter-spacing:-0.42px;clip-path:inset(0 0 0px 0);">2008-06-16</div>
<div class="t" style="left:689px;top:663.8px;font-size:12.5px;color:#d6d6d6;letter-spacing:-0.42px;clip-path:inset(0 0 0px 0);">2009-10-19</div>
<div class="t" style="left:689px;top:689.8px;font-size:12.5px;color:#d6d6d6;letter-spacing:-0.42px;clip-path:inset(0 0 0px 0);">2009-06-08</div>
<div class="t b" style="left:805.2px;top:560.2px;font-size:12.3px;color:#fff;letter-spacing:-0.42px;">dateKe...</div>
<div class="t" style="left:789px;top:585.8px;font-size:12.5px;color:#d6d6d6;letter-spacing:-0.42px;clip-path:inset(0 0 0px 0);">2</div>
<div class="t" style="left:789px;top:611.8px;font-size:12.5px;color:#d6d6d6;letter-spacing:-0.42px;clip-path:inset(0 0 0px 0);">4</div>
<div class="t" style="left:789px;top:637.8px;font-size:12.5px;color:#d6d6d6;letter-spacing:-0.42px;clip-path:inset(0 0 0px 0);">2</div>
<div class="t" style="left:789px;top:663.8px;font-size:12.5px;color:#d6d6d6;letter-spacing:-0.42px;clip-path:inset(0 0 0px 0);">4</div>
<div class="t" style="left:789px;top:689.8px;font-size:12.5px;color:#d6d6d6;letter-spacing:-0.42px;clip-path:inset(0 0 0px 0);">2</div>
<div class="t b" style="left:905.2px;top:560.2px;font-size:12.3px;color:#fff;letter-spacing:-0.42px;">dateKe...</div>
<div class="t" style="left:889px;top:585.8px;font-size:12.5px;color:#d6d6d6;letter-spacing:-0.42px;clip-path:inset(0 0 0px 0);">6</div>
<div class="t" style="left:889px;top:611.8px;font-size:12.5px;color:#d6d6d6;letter-spacing:-0.42px;clip-path:inset(0 0 0px 0);">12</div>
<div class="t" style="left:889px;top:637.8px;font-size:12.5px;color:#d6d6d6;letter-spacing:-0.42px;clip-path:inset(0 0 0px 0);">6</div>
<div class="t" style="left:889px;top:663.8px;font-size:12.5px;color:#d6d6d6;letter-spacing:-0.42px;clip-path:inset(0 0 0px 0);">10</div>
<div class="t" style="left:889px;top:689.8px;font-size:12.5px;color:#d6d6d6;letter-spacing:-0.42px;clip-path:inset(0 0 0px 0);">6</div>
<div class="t b" style="left:1005.2px;top:560.2px;font-size:12.3px;color:#fff;letter-spacing:-0.42px;">dateKe...</div>
<div class="t" style="left:989px;top:585.8px;font-size:12.5px;color:#d6d6d6;letter-spacing:-0.42px;clip-path:inset(0 0 0px 0);">June</div>
<div class="t" style="left:989px;top:611.8px;font-size:12.5px;color:#d6d6d6;letter-spacing:-0.42px;clip-path:inset(0 0 0px 0);">December</div>
<div class="t" style="left:989px;top:637.8px;font-size:12.5px;color:#d6d6d6;letter-spacing:-0.42px;clip-path:inset(0 0 0px 0);">June</div>
<div class="t" style="left:989px;top:663.8px;font-size:12.5px;color:#d6d6d6;letter-spacing:-0.42px;clip-path:inset(0 0 0px 0);">October</div>
<div class="t" style="left:989px;top:689.8px;font-size:12.5px;color:#d6d6d6;letter-spacing:-0.42px;clip-path:inset(0 0 0px 0);">June</div>
<div class="t b" style="left:1105.2px;top:560.2px;font-size:12.3px;color:#fff;letter-spacing:-0.42px;">dateKe...</div>
<div class="t" style="left:1089px;top:585.8px;font-size:12.5px;color:#d6d6d6;letter-spacing:-0.42px;clip-path:inset(0 0 0px 0);">26</div>
<div class="t" style="left:1089px;top:611.8px;font-size:12.5px;color:#d6d6d6;letter-spacing:-0.42px;clip-path:inset(0 0 0px 0);">49</div>
<div class="t" style="left:1089px;top:637.8px;font-size:12.5px;color:#d6d6d6;letter-spacing:-0.42px;clip-path:inset(0 0 0px 0);">25</div>
<div class="t" style="left:1089px;top:663.8px;font-size:12.5px;color:#d6d6d6;letter-spacing:-0.42px;clip-path:inset(0 0 0px 0);">43</div>
<div class="t" style="left:1089px;top:689.8px;font-size:12.5px;color:#d6d6d6;letter-spacing:-0.42px;clip-path:inset(0 0 0px 0);">24</div>
<div class="t b" style="left:1205.2px;top:560.2px;font-size:12.3px;color:#fff;letter-spacing:-0.42px;">dateKe...</div>
<div class="t" style="left:1189px;top:585.8px;font-size:12.5px;color:#d6d6d6;letter-spacing:-0.42px;clip-path:inset(0 0 0px 0);">7</div>
<div class="t" style="left:1189px;top:611.8px;font-size:12.5px;color:#d6d6d6;letter-spacing:-0.42px;clip-path:inset(0 0 0px 0);">5</div>
<div class="t" style="left:1189px;top:637.8px;font-size:12.5px;color:#d6d6d6;letter-spacing:-0.42px;clip-path:inset(0 0 0px 0);">5</div>
<div class="t" style="left:1189px;top:663.8px;font-size:12.5px;color:#d6d6d6;letter-spacing:-0.42px;clip-path:inset(0 0 0px 0);">6</div>
<div class="t" style="left:1189px;top:689.8px;font-size:12.5px;color:#d6d6d6;letter-spacing:-0.42px;clip-path:inset(0 0 0px 0);">5</div>
<div class="t b" style="left:1305.2px;top:560.2px;font-size:12.3px;color:#fff;letter-spacing:-0.42px;">dateKe...</div>
<div class="t" style="left:1289px;top:585.8px;font-size:12.5px;color:#d6d6d6;letter-spacing:-0.42px;clip-path:inset(0 0 0px 0);">Saturday</div>
<div class="t" style="left:1289px;top:611.8px;font-size:12.5px;color:#d6d6d6;letter-spacing:-0.42px;clip-path:inset(0 0 0px 0);">Thursday</div>
<div class="t" style="left:1289px;top:637.8px;font-size:12.5px;color:#d6d6d6;letter-spacing:-0.42px;clip-path:inset(0 0 0px 0);">Thursday</div>
<div class="t" style="left:1289px;top:663.8px;font-size:12.5px;color:#d6d6d6;letter-spacing:-0.42px;clip-path:inset(0 0 0px 0);">Friday</div>
<div class="t" style="left:1289px;top:689.8px;font-size:12.5px;color:#d6d6d6;letter-spacing:-0.42px;clip-path:inset(0 0 0px 0);">Thursday</div>
<div class="t b" style="left:1405.2px;top:560.2px;font-size:12.3px;color:#fff;letter-spacing:-0.42px;">dateKe...</div>
<div class="t" style="left:1389px;top:585.8px;font-size:12.5px;color:#d6d6d6;letter-spacing:-0.42px;clip-path:inset(0 0 0px 0);">28</div>
<div class="t" style="left:1389px;top:611.8px;font-size:12.5px;color:#d6d6d6;letter-spacing:-0.42px;clip-path:inset(0 0 0px 0);">4</div>
<div class="t" style="left:1389px;top:637.8px;font-size:12.5px;color:#d6d6d6;letter-spacing:-0.42px;clip-path:inset(0 0 0px 0);">19</div>
<div class="t" style="left:1389px;top:663.8px;font-size:12.5px;color:#d6d6d6;letter-spacing:-0.42px;clip-path:inset(0 0 0px 0);">23</div>
<div class="t" style="left:1389px;top:689.8px;font-size:12.5px;color:#d6d6d6;letter-spacing:-0.42px;clip-path:inset(0 0 0px 0);">11</div>
<svg style="left:0px;top:0px" width="1500" height="716" viewBox="0 0 1500 716"><rect x="391" y="560.8" width="13" height="1.7" fill="#4a9ff5"/><rect x="391" y="564.2" width="11" height="1.7" fill="#4a9ff5"/><rect x="391" y="567.6" width="8.6" height="1.7" fill="#4a9ff5"/><rect x="391" y="571" width="4.6" height="1.7" fill="#4a9ff5"/><rect x="491" y="560.8" width="13" height="1.7" fill="#4a9ff5"/><rect x="491" y="564.2" width="11" height="1.7" fill="#4a9ff5"/><rect x="491" y="567.6" width="8.6" height="1.7" fill="#4a9ff5"/><rect x="491" y="571" width="4.6" height="1.7" fill="#4a9ff5"/><rect x="591" y="560.8" width="13" height="1.7" fill="#4a9ff5"/><rect x="591" y="564.2" width="11" height="1.7" fill="#4a9ff5"/><rect x="591" y="567.6" width="8.6" height="1.7" fill="#4a9ff5"/><rect x="591" y="571" width="4.6" height="1.7" fill="#4a9ff5"/><rect x="691" y="560.8" width="13" height="1.7" fill="#4a9ff5"/><rect x="691" y="564.2" width="11" height="1.7" fill="#4a9ff5"/><rect x="691" y="567.6" width="8.6" height="1.7" fill="#4a9ff5"/><rect x="691" y="571" width="4.6" height="1.7" fill="#4a9ff5"/><rect x="791" y="560.8" width="13" height="1.7" fill="#4a9ff5"/><rect x="791" y="564.2" width="11" height="1.7" fill="#4a9ff5"/><rect x="791" y="567.6" width="8.6" height="1.7" fill="#4a9ff5"/><rect x="791" y="571" width="4.6" height="1.7" fill="#4a9ff5"/><rect x="891" y="560.8" width="13" height="1.7" fill="#4a9ff5"/><rect x="891" y="564.2" width="11" height="1.7" fill="#4a9ff5"/><rect x="891" y="567.6" width="8.6" height="1.7" fill="#4a9ff5"/><rect x="891" y="571" width="4.6" height="1.7" fill="#4a9ff5"/><rect x="991" y="560.8" width="13" height="1.7" fill="#4a9ff5"/><rect x="991" y="564.2" width="11" height="1.7" fill="#4a9ff5"/><rect x="991" y="567.6" width="8.6" height="1.7" fill="#4a9ff5"/><rect x="991" y="571" width="4.6" height="1.7" fill="#4a9ff5"/><rect x="1091" y="560.8" width="13" height="1.7" fill="#4a9ff5"/><rect x="1091" y="564.2" width="11" height="1.7" fill="#4a9ff5"/><rect x="1091" y="567.6" width="8.6" height="1.7" fill="#4a9ff5"/><rect x="1091" y="571" width="4.6" height="1.7" fill="#4a9ff5"/><rect x="1191" y="560.8" width="13" height="1.7" fill="#4a9ff5"/><rect x="1191" y="564.2" width="11" height="1.7" fill="#4a9ff5"/><rect x="1191" y="567.6" width="8.6" height="1.7" fill="#4a9ff5"/><rect x="1191" y="571" width="4.6" height="1.7" fill="#4a9ff5"/><rect x="1291" y="560.8" width="13" height="1.7" fill="#4a9ff5"/><rect x="1291" y="564.2" width="11" height="1.7" fill="#4a9ff5"/><rect x="1291" y="567.6" width="8.6" height="1.7" fill="#4a9ff5"/><rect x="1291" y="571" width="4.6" height="1.7" fill="#4a9ff5"/><rect x="1391" y="560.8" width="13" height="1.7" fill="#4a9ff5"/><rect x="1391" y="564.2" width="11" height="1.7" fill="#4a9ff5"/><rect x="1391" y="567.6" width="8.6" height="1.7" fill="#4a9ff5"/><rect x="1391" y="571" width="4.6" height="1.7" fill="#4a9ff5"/><path d="M1472.5 586.6 l3.8 -4 l3.8 4 z" fill="#c9c9c9"/><path d="M1472.5 694.4 l3.8 4 l3.8 -4 z" fill="#c9c9c9"/></svg>
<div class="a" style="left:336px;top:703px;width:1146px;height:11px;background:#4a4a4a;"></div>
<div class="a" style="left:1061px;top:703px;width:394.8px;height:11px;background:#686868;"></div>
<div class="a" style="left:1471px;top:703px;width:11px;height:11px;background:#fff;"></div>
<svg style="left:0px;top:0px" width="1500" height="716" viewBox="0 0 1500 716"><path d="M343 705 l-4 3.6 l4 3.6 z" fill="#c9c9c9"/><path d="M1462 705 l4 3.6 l-4 3.6 z" fill="#c9c9c9"/></svg>
<svg style="left:0px;top:0px" width="1500" height="716" viewBox="0 0 1500 716"><g fill="none" stroke="#d9d9d9" stroke-width="1.1"><path d="M1416.3 538.4 q6.8 -9.6 13.6 0 q-6.8 9.6 -13.6 0 z"/><circle cx="1423.1" cy="538.4" r="3"/></g><path d="M1446.6 533 l3.6 3.6 l-1.2 0.4 l-1.6 1.6 l0.2 2.4 l-1 1 l-2.2 -2.2 l-3.4 3.6 l-0.5 -0.5 l3.6 -3.4 l-2.2 -2.2 l1 -1 l2.4 0.2 l1.6 -1.6 z" fill="#d9d9d9"/><path d="M1462 537.2 l5.2 5 l5.2 -5" fill="none" stroke="#d9d9d9" stroke-width="1.2"/></svg>
<div class="a" style="left:1482px;top:0px;width:3px;height:716px;background:#232323;"></div>
<div class="a" style="left:1485px;top:1px;width:370px;height:715px;background:#484848;"></div>
<div class="a" style="left:1486px;top:29px;width:369px;height:1px;background:#232323;"></div>
<div class="t" style="left:1493.3px;top:7px;font-size:12.5px;color:#ededed;letter-spacing:-0.12px;-webkit-text-stroke:0.35px #ededed;">Properties</div>
<div class="a" style="left:1496px;top:41px;width:347px;height:96px;background:#535353;border:1px solid #222"></div>
<div class="t b" style="left:1525.6px;top:47.6px;font-size:12.5px;color:#ececec;letter-spacing:-0.65px;">Result Properties</div>
<div class="t" style="left:1507.6px;top:68.8px;font-size:12.5px;color:#bcbcbc;letter-spacing:-0.36px;">Resulting Table Name</div>
<div class="a" style="left:1511px;top:96.5px;width:317px;height:25px;background:#f7f7f7;border:1px solid #d0d0d0"></div>
<div class="t" style="left:1518.3px;top:102px;font-size:12.5px;color:#222;letter-spacing:-0.36px;">data</div>
<div class="a" style="left:1496px;top:140px;width:347px;height:332px;background:#535353;border:1px solid #222"></div>
<div class="t b" style="left:1549.5px;top:146.8px;font-size:12.5px;color:#ececec;letter-spacing:-0.45px;">Time Intelligence Node</div>
<div class="t" style="left:1507.6px;top:168px;font-size:12.5px;color:#bcbcbc;letter-spacing:-0.36px;">Column Name</div>
<div class="a" style="left:1508px;top:192.2px;width:323px;height:25.5px;background:#535353;border:1px solid #7c7c7c"></div>
<div class="t" style="left:1518.6px;top:197.39999999999998px;font-size:12.5px;color:#dedede;letter-spacing:-0.36px;">dateKey</div>
<div class="a" style="left:1508px;top:233px;width:14px;height:14px;background:#f1f1f1;border:1.3px solid #1c1c1c"></div>
<div class="t" style="left:1531px;top:232px;font-size:12.5px;color:#f4f4f4;letter-spacing:-0.27px;">Add Year Column</div>
<div class="a" style="left:1508px;top:254px;width:14px;height:14px;background:#f1f1f1;border:1.3px solid #1c1c1c"></div>
<div class="t" style="left:1531px;top:253px;font-size:12.5px;color:#f4f4f4;letter-spacing:-0.27px;">Add Year Quarter Column</div>
<div class="a" style="left:1508px;top:275px;width:14px;height:14px;background:#f1f1f1;border:1.3px solid #1c1c1c"></div>
<div class="t" style="left:1531px;top:274px;font-size:12.5px;color:#f4f4f4;letter-spacing:-0.27px;">Add Year Month Column</div>
<div class="a" style="left:1508px;top:296px;width:14px;height:14px;background:#f1f1f1;border:1.3px solid #1c1c1c"></div>
<div class="t" style="left:1531px;top:295px;font-size:12.5px;color:#f4f4f4;letter-spacing:-0.27px;">Add Year - Week Column</div>
<div class="a" style="left:1508px;top:317px;width:14px;height:14px;background:#f1f1f1;border:1.3px solid #1c1c1c"></div>
<div class="t" style="left:1531px;top:316px;font-size:12.5px;color:#f4f4f4;letter-spacing:-0.27px;">Add Quarter Column</div>
<div class="a" style="left:1508px;top:338px;width:14px;height:14px;background:#f1f1f1;border:1.3px solid #1c1c1c"></div>
<div class="t" style="left:1531px;top:337px;font-size:12.5px;color:#f4f4f4;letter-spacing:-0.27px;">Add Month Name Column</div>
<div class="a" style="left:1508px;top:359px;width:14px;height:14px;background:#f1f1f1;border:1.3px solid #1c1c1c"></div>
<div class="t" style="left:1531px;top:358px;font-size:12.5px;color:#f4f4f4;letter-spacing:-0.27px;">Add Month Number Column</div>
<div class="a" style="left:1508px;top:380px;width:14px;height:14px;background:#f1f1f1;border:1.3px solid #1c1c1c"></div>
<div class="t" style="left:1531px;top:379px;font-size:12.5px;color:#f4f4f4;letter-spacing:-0.27px;">Add Week Number Column</div>
<div class="a" style="left:1508px;top:401px;width:14px;height:14px;background:#f1f1f1;border:1.3px solid #1c1c1c"></div>
<div class="t" style="left:1531px;top:400px;font-size:12.5px;color:#f4f4f4;letter-spacing:-0.27px;">Add Weekday Number Column</div>
<div class="a" style="left:1508px;top:422px;width:14px;height:14px;background:#f1f1f1;border:1.3px solid #1c1c1c"></div>
<div class="t" style="left:1531px;top:421px;font-size:12.5px;color:#f4f4f4;letter-spacing:-0.27px;">Add Weekday Name Column</div>
<div class="a" style="left:1508px;top:443px;width:14px;height:14px;background:#f1f1f1;border:1.3px solid #1c1c1c"></div>
<div class="t" style="left:1531px;top:442px;font-size:12.5px;color:#f4f4f4;letter-spacing:-0.27px;">Add Day Of Year Column</div>
<div class="a" style="left:1496px;top:475px;width:347px;height:185px;background:#535353;border:1px solid #222"></div>
<div class="t b" style="left:1549.8px;top:481.8px;font-size:12.5px;color:#ececec;letter-spacing:-0.62px;">Advanced Options</div>
<div class="t" style="left:1507.6px;top:502.8px;font-size:12.5px;color:#bcbcbc;letter-spacing:-0.36px;">Year Start (Day/Month)</div>
<div class="a" style="left:1508.6px;top:528px;width:322px;height:24px;background:#fff;"></div>
<div class="t" style="left:1515px;top:533.3px;font-size:12.5px;color:#222;">01/01</div>
<div class="a" style="left:1508px;top:560.3px;width:323px;height:25.5px;background:#535353;border:1px solid #7c7c7c"></div>
<div class="t" style="left:1518.6px;top:565.5px;font-size:12.5px;color:#dedede;letter-spacing:-0.36px;">Current Year</div>
<div class="t" style="left:1507.6px;top:597.6px;font-size:12.5px;color:#bcbcbc;letter-spacing:-0.36px;">Week Start</div>
<div class="a" style="left:1508px;top:622.2px;width:323px;height:25.5px;background:#535353;border:1px solid #7c7c7c"></div>
<div class="t" style="left:1518.6px;top:627.4000000000001px;font-size:12.5px;color:#dedede;letter-spacing:-0.36px;">Sunday</div>
<div class="a" style="left:1496px;top:663px;width:347px;height:28px;background:#535353;border:1px solid #222"></div>
<div class="t b" style="left:1549.8px;top:669.8px;font-size:12.5px;color:#ececec;letter-spacing:-0.62px;">Column Selection</div>
<div class="a" style="left:1496px;top:694px;width:347px;height:30px;background:#535353;border:1px solid #222"></div>
<div class="t b" style="left:1549.8px;top:700.6px;font-size:12.5px;color:#ececec;letter-spacing:-0.6px;">Set Variable Values</div>
<svg style="left:0px;top:0px" width="1855" height="716" viewBox="0 0 1855 716"><g fill="none" stroke="#dcdcdc" stroke-width="1.1"><path d="M1810 14.2 q7 -9.6 14 0 q-7 9.6 -14 0 z"/><circle cx="1817" cy="14.2" r="3"/></g><path d="M1837.5 8.8 l5.4 5.4 l-5.4 5.4" fill="none" stroke="#dcdcdc" stroke-width="1.2"/><path d="M1507 52.4 l5.2 5.2 l5.2 -5.2" fill="none" stroke="#d4d4d4" stroke-width="1.2"/><path d="M1507 151.9 l5.2 5.2 l5.2 -5.2" fill="none" stroke="#d4d4d4" stroke-width="1.2"/><path d="M1810 202.6 h10 l-5 5.4 z" fill="#b4b4b4"/><path d="M1511.2 240.3 l2.9 3 l5.3 -6.4" fill="none" stroke="#111" stroke-width="2.1"/><path d="M1511.2 261.3 l2.9 3 l5.3 -6.4" fill="none" stroke="#111" stroke-width="2.1"/><path d="M1511.2 282.3 l2.9 3 l5.3 -6.4" fill="none" stroke="#111" stroke-width="2.1"/><path d="M1511.2 303.3 l2.9 3 l5.3 -6.4" fill="none" stroke="#111" stroke-width="2.1"/><path d="M1511.2 324.3 l2.9 3 l5.3 -6.4" fill="none" stroke="#111" stroke-width="2.1"/><path d="M1511.2 345.3 l2.9 3 l5.3 -6.4" fill="none" stroke="#111" stroke-width="2.1"/><path d="M1511.2 366.3 l2.9 3 l5.3 -6.4" fill="none" stroke="#111" stroke-width="2.1"/><path d="M1511.2 387.3 l2.9 3 l5.3 -6.4" fill="none" stroke="#111" stroke-width="2.1"/><path d="M1511.2 408.3 l2.9 3 l5.3 -6.4" fill="none" stroke="#111" stroke-width="2.1"/><path d="M1511.2 429.3 l2.9 3 l5.3 -6.4" fill="none" stroke="#111" stroke-width="2.1"/><path d="M1511.2 450.3 l2.9 3 l5.3 -6.4" fill="none" stroke="#111" stroke-width="2.1"/><path d="M1507 486.0 l5.2 5.2 l5.2 -5.2" fill="none" stroke="#d4d4d4" stroke-width="1.2"/><path d="M1810 570.6999999999999 h10 l-5 5.4 z" fill="#b4b4b4"/><path d="M1810 632.6 h10 l-5 5.4 z" fill="#b4b4b4"/><path d="M1507 674.3 l5.2 5.2 l5.2 -5.2" fill="none" stroke="#d4d4d4" stroke-width="1.2"/><path d="M1507 705.3 l5.2 5.2 l5.2 -5.2" fill="none" stroke="#d4d4d4" stroke-width="1.2"/><g transform="translate(1532 154.6) scale(0.68)"><path d="M10.3 -3.2 A10.8 10.8 0 1 0 2.2 10.55" fill="none" stroke="#3dbba6" stroke-width="1.5"/><path d="M1 -7 v8 h-6.2" fill="none" stroke="#c9c9c9" stroke-width="1.6"/><path d="M6.2 -2.6 h6.6 l-2.2 4.2 h2.6 l-7.6 9.6 l1.8 -6.6 h-3 z" fill="#5aa5dc" stroke="#535353" stroke-width="0.8" paint-order="stroke"/></g><g transform="translate(1532 489) scale(0.93)"><circle r="5.2" fill="none" stroke="#c9c9c9" stroke-width="3.2"/><rect x="-1.5" y="-7.6" width="3" height="3" fill="#c9c9c9" transform="rotate(0)"/><rect x="-1.5" y="-7.6" width="3" height="3" fill="#c9c9c9" transform="rotate(45)"/><rect x="-1.5" y="-7.6" width="3" height="3" fill="#c9c9c9" transform="rotate(90)"/><rect x="-1.5" y="-7.6" width="3" height="3" fill="#c9c9c9" transform="rotate(135)"/><rect x="-1.5" y="-7.6" width="3" height="3" fill="#c9c9c9" transform="rotate(180)"/><rect x="-1.5" y="-7.6" width="3" height="3" fill="#c9c9c9" transform="rotate(225)"/><rect x="-1.5" y="-7.6" width="3" height="3" fill="#c9c9c9" transform="rotate(270)"/><rect x="-1.5" y="-7.6" width="3" height="3" fill="#c9c9c9" transform="rotate(315)"/></g><g><rect x="1810.2" y="533.6" width="15" height="13.4" fill="#fff" stroke="#222" stroke-width="1.1"/><path d="M1810.2 536.6 h15" stroke="#222" stroke-width="1.4"/><path d="M1813.5 531.4 v3 M1817.7 531.4 v3 M1821.9 531.4 v3" stroke="#222" stroke-width="1.2"/><rect x="1812.0" y="538.6" width="1.7" height="1.5" fill="#222"/><rect x="1812.0" y="541.4" width="1.7" height="1.5" fill="#222"/><rect x="1812.0" y="544.2" width="1.7" height="1.5" fill="#222"/><rect x="1815.3" y="538.6" width="1.7" height="1.5" fill="#222"/><rect x="1815.3" y="541.4" width="1.7" height="1.5" fill="#222"/><rect x="1815.3" y="544.2" width="1.7" height="1.5" fill="#222"/><rect x="1818.6" y="538.6" width="1.7" height="1.5" fill="#222"/><rect x="1818.6" y="541.4" width="1.7" height="1.5" fill="#222"/><rect x="1818.6" y="544.2" width="1.7" height="1.5" fill="#222"/><rect x="1821.9" y="538.6" width="1.7" height="1.5" fill="#222"/><rect x="1821.9" y="541.4" width="1.7" height="1.5" fill="#222"/><rect x="1821.9" y="544.2" width="1.7" height="1.5" fill="#222"/></g><rect x="1525" y="670" width="1.8" height="2.6" fill="#6a6a6a"/><rect x="1525" y="673.6" width="1.8" height="11.4" fill="#686868"/><rect x="1527.9" y="669.8" width="3" height="2.8" fill="#f2f2f2"/><rect x="1527.9" y="673.6" width="3" height="11.4" fill="#3dbba6"/><rect x="1532.4" y="670" width="2.2" height="2.6" fill="#6a6a6a"/><rect x="1532.4" y="673.6" width="2.2" height="11.4" fill="#686868"/><rect x="1536" y="670" width="2.4" height="2.6" fill="#6a6a6a"/><rect x="1536" y="673.6" width="2.4" height="11.4" fill="#686868"/><path d="M1534 682 l2 2.6 l3.6 -4.6" fill="none" stroke="#7fae2f" stroke-width="1.1"/><g stroke="#e8922e" stroke-width="1.5" fill="none"><path d="M1531.4 701.4 l-2.6 11.4 M1535.6 701.4 l-2.6 11.4 M1527 705.4 h10.4 M1526 709.4 h7"/></g><circle cx="1534.6" cy="710.4" r="3.1" fill="#535353" stroke="#e0e0e0" stroke-width="0.9"/><circle cx="1534.6" cy="710.4" r="1.1" fill="none" stroke="#e0e0e0" stroke-width="0.8"/></svg>
<div class="a" style="left:1854px;top:1px;width:1px;height:713px;background:#383838;"></div>
<div class="a" style="left:0px;top:714px;width:1855px;height:2px;background:#0c0c0c;"></div>
<div class="a" style="left:1051px;top:200px;width:40px;height:40px;border-radius:50%;background:#e84545;box-shadow:0.5px 1.5px 2px rgba(0,0,0,0.35)"></div>
<svg style="left:1051px;top:200px" width="40" height="40" viewBox="-20 -20 40 40"><path d="M3.2 -12.1 V9.9 H-0.3 V-8 L-5.4 -4.1 L-6.1 -6.9 L0.6 -12.1 Z" fill="#fff"/></svg>
<div class="a" style="left:1692px;top:146px;width:40px;height:40px;border-radius:50%;background:#e84545;box-shadow:0.5px 1.5px 2px rgba(0,0,0,0.35)"></div>
<div class="t" style="left:1692px;top:146px;width:40px;height:40px;line-height:40.5px;text-align:center;font-size:31px;color:#fff">2</div>
<div class="a" style="left:1662px;top:483px;width:40px;height:40px;border-radius:50%;background:#e84545;box-shadow:0.5px 1.5px 2px rgba(0,0,0,0.35)"></div>
<div class="t" style="left:1662px;top:483px;width:40px;height:40px;line-height:40.5px;text-align:center;font-size:31px;color:#fff">3</div>
<div class="a" style="left:1365px;top:511.79999999999995px;width:40px;height:40px;border-radius:50%;background:#e84545;box-shadow:0.5px 1.5px 2px rgba(0,0,0,0.35)"></div>
<div class="t" style="left:1364px;top:511.79999999999995px;width:40px;height:40px;line-height:40.5px;text-align:center;font-size:31px;color:#fff">4</div>
<svg style="left:0;top:0" width="1855" height="716" viewBox="0 0 1855 716"><defs><filter id="ds" x="-5%" y="-5%" width="110%" height="115%"><feDropShadow dx="0.8" dy="1.6" stdDeviation="1" flood-color="#000" flood-opacity="0.3"/></filter></defs><g filter="url(#ds)"><path d="M317.3 404.4 L871.6 254.6" stroke="#e84545" stroke-width="5.2" stroke-dasharray="16 4.4" stroke-linecap="butt" fill="none"/><circle cx="317.3" cy="404.4" r="2.6" fill="#e84545"/><path d="M887 250.4 L873.1 262.3 L872.5 254.3 L869.0 247.1 Z" fill="#e84545"/></g></svg>
</body></html>
